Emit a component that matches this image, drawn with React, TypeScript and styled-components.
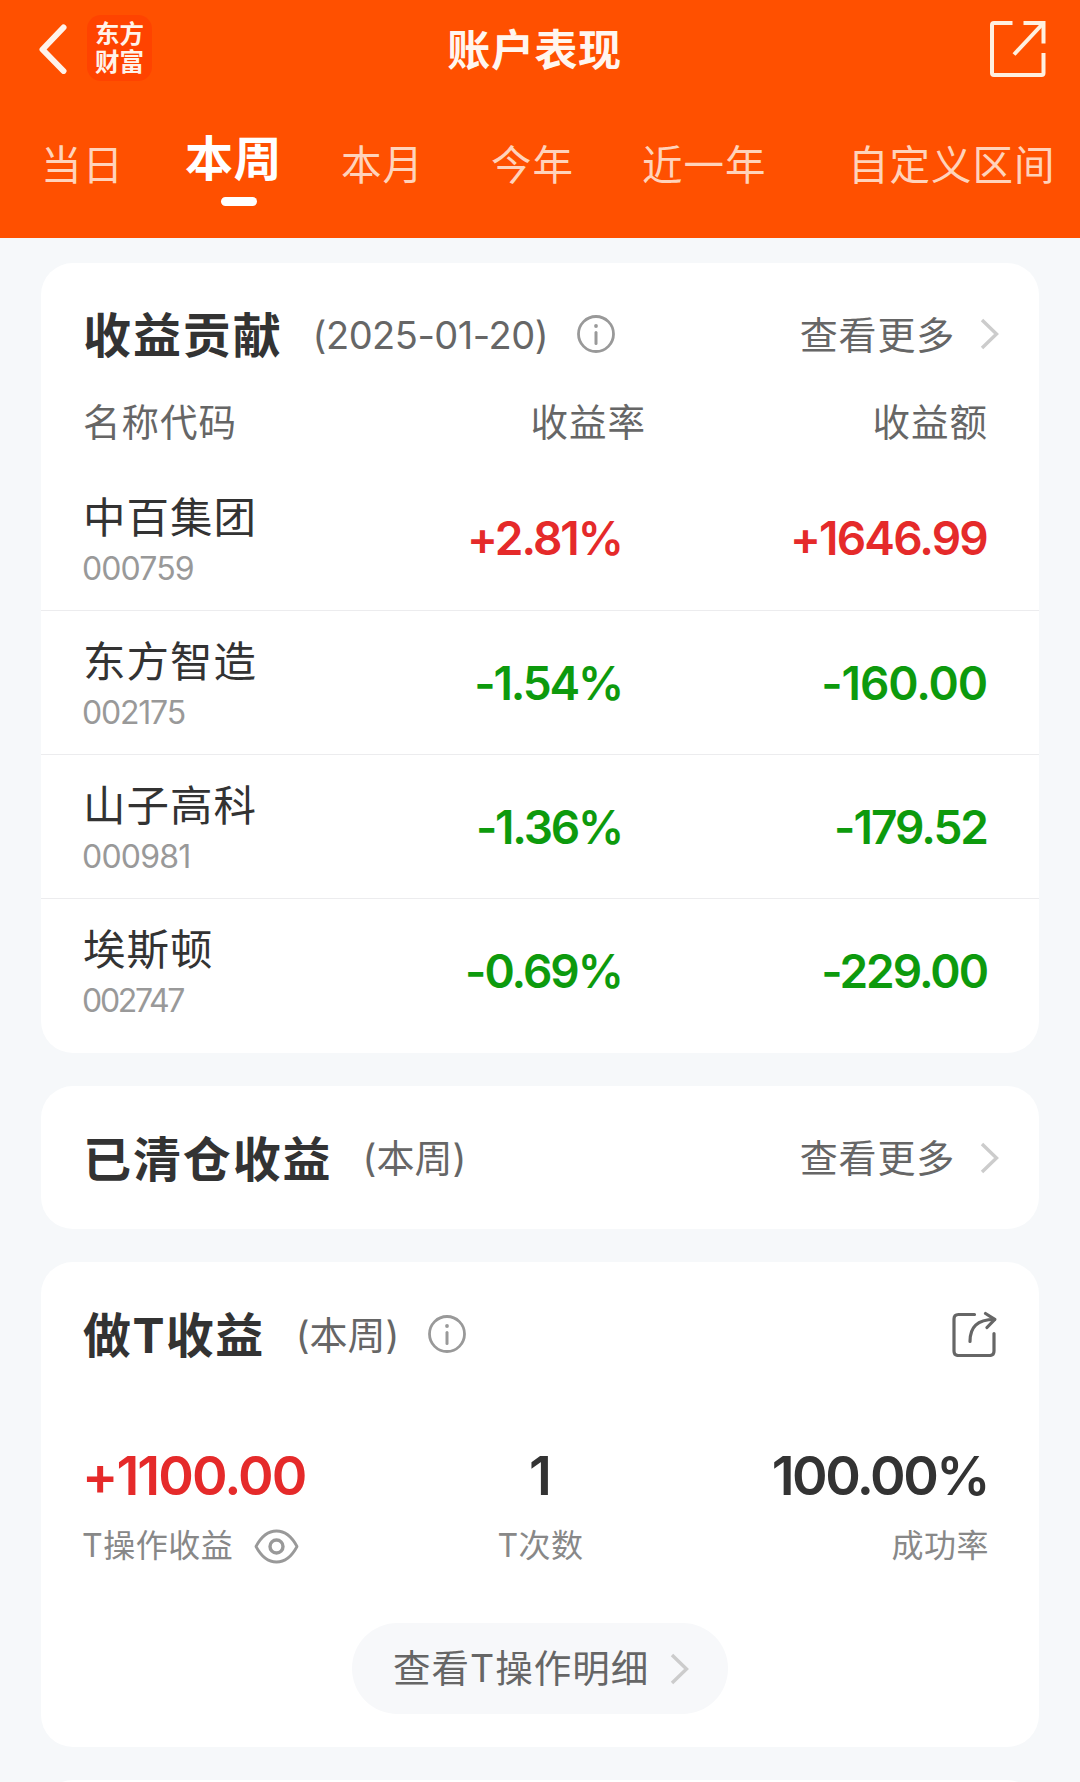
import React from "react";
import styled, { createGlobalStyle } from "styled-components";

const GlobalStyle = createGlobalStyle`
  * { box-sizing: border-box; }
  body {
    margin: 0;
    background: #f6f8fa;
    font-family: Inter, "Noto Sans CJK SC", sans-serif;
    color: #333;
  }
`;

const Screen = styled.div`
  width: 1080px;
  height: 1782px;
  overflow: hidden;
  background: #f6f8fa;
`;

const Header = styled.header`
  height: 238px;
  background: #ff5000;
  color: #fff;
`;

const NavBar = styled.div`
  height: 98px;
  display: grid;
  grid-template-columns: 300px 1fr 300px;
  align-items: center;
  padding: 0 34px 0 39px;
`;

const NavLeft = styled.div`
  display: flex;
  align-items: center;
  gap: 20px;
`;

const NavRight = styled.div`
  display: flex;
  justify-content: flex-end;
`;

const Logo = styled.div`
  width: 65px;
  height: 66px;
  margin-top: -2px;
  border-radius: 14px;
  background: #ff4300;
  display: flex;
  flex-direction: column;
  justify-content: center;
  align-items: center;
  font-size: 24.5px;
  font-weight: 700;
  line-height: 28px;
  color: #fff3ea;
`;

const NavTitle = styled.h1`
  margin: 0 7px 0 -9px;
  padding-top: 1px;
  text-align: center;
  font-size: 43px;
  font-weight: 700;
  letter-spacing: 0.6px;
  line-height: 60px;
  color: #fff6ef;
`;

const Tabs = styled.nav`
  height: 140px;
  display: flex;
  padding: 36px 0 0 41px;
`;

const Tab = styled.div<{ $width: number; $active?: boolean }>`
  width: ${(p) => p.$width}px;
  flex: none;
  display: flex;
  flex-direction: column;
  white-space: nowrap;
  margin-top: ${(p) => (p.$active ? -7 : 0)}px;
  font-size: ${(p) => (p.$active ? 48 : 40.5)}px;
  font-weight: ${(p) => (p.$active ? 700 : 400)};
  letter-spacing: ${(p) => (p.$active ? 0.5 : 1)}px;
  line-height: 64px;
  color: ${(p) => (p.$active ? "#fff" : "#ffd3bb")};
`;

const TabMark = styled.span`
  width: 36px;
  height: 9px;
  margin: 6px 0 0 36px;
  border-radius: 5px;
  background: #fff;
`;

const Content = styled.main`
  display: flex;
  flex-direction: column;
  gap: 33px;
  padding: 25px 41px 0;
`;

const Card = styled.section<{ $height: number }>`
  height: ${(p) => p.$height}px;
  flex: none;
  border-radius: 32px;
  background: #fff;
`;

const CardHead = styled.div<{ $height: number }>`
  height: ${(p) => p.$height}px;
  display: flex;
  align-items: center;
  padding: 0 40px 0 42px;
`;

const CardTitle = styled.h2<{ $gap: number; $spacing?: number }>`
  margin: 0 ${(p) => p.$gap}px 0 0;
  padding-top: 4px;
  font-size: 48px;
  font-weight: 700;
  letter-spacing: ${(p) => p.$spacing ?? 1.9}px;
  line-height: 60px;
  color: #333;
`;

const Period = styled.span<{ $spacing?: number }>`
  margin-right: 29px;
  padding-top: 1px;
  font-size: 38px;
  letter-spacing: ${(p) => p.$spacing ?? 0}px;
  line-height: 50px;
  color: #666;
`;

const More = styled.div`
  margin-left: auto;
  display: flex;
  align-items: center;
  gap: 25px;
  font-size: 38px;
  letter-spacing: 0.8px;
  line-height: 50px;
  color: #666;
`;

const MoreText = styled.span`
  padding-top: 1px;
`;

const CardAction = styled.div`
  margin-left: auto;
  margin-right: 2px;
  display: flex;
`;

const ColumnHeads = styled.div`
  display: grid;
  grid-template-columns: 260px 303px 1fr;
  height: 34px;
  margin-bottom: 27px;
  padding: 1px 51px 0 42px;
  font-size: 37.5px;
  letter-spacing: 1px;
  line-height: 34px;
  color: #666;
`;

const HeadCell = styled.span<{ $right?: boolean }>`
  text-align: ${(p) => (p.$right ? "right" : "left")};
`;

const StockRow = styled.div`
  height: 144px;
  display: grid;
  grid-template-columns: 260px 277px 1fr;
  align-items: center;
  padding: 0 52px 0 43px;

  & + & {
    border-top: 1px solid #ececee;
  }
`;

const StockName = styled.div`
  padding-top: 3px;
  margin-left: -1px;
  font-size: 42.5px;
  letter-spacing: 1px;
  line-height: 50px;
  color: #333;
`;

const StockCode = styled.div<{ $spacing: number }>`
  margin-top: 8px;
  margin-left: -2px;
  font-size: 32px;
  font-weight: 400;
  letter-spacing: ${(p) => p.$spacing}px;
  line-height: 36px;
  color: #999;
`;

const Amount = styled.div<{ $up: boolean; $spacing: number; $bleed: number }>`
  text-align: right;
  font-size: 46px;
  font-weight: 600;
  letter-spacing: ${(p) => p.$spacing}px;
  margin-right: ${(p) => -p.$bleed}px;
  line-height: 56px;
  white-space: nowrap;
  color: ${(p) => (p.$up ? "#e52a2a" : "#0d9a0d")};
`;

const Stats = styled.div`
  display: grid;
  grid-template-columns: 300px 1fr 300px;
  padding: 40px 50px 0 41px;
`;

const Stat = styled.div<{ $align: string; $shift?: number }>`
  display: flex;
  flex-direction: column;
  align-items: ${(p) => p.$align};
  margin-left: ${(p) => p.$shift ?? 0}px;
`;

const StatValue = styled.div<{ $up?: boolean; $spacing: number; $inset?: number }>`
  margin-right: ${(p) => p.$inset ?? 0}px;
  font-size: 54px;
  font-weight: 600;
  letter-spacing: ${(p) => p.$spacing}px;
  line-height: 60px;
  color: ${(p) => (p.$up ? "#e52a2a" : "#333")};
`;

const StatLabel = styled.div`
  display: flex;
  align-items: center;
  gap: 21px;
  margin-top: 20px;
  font-size: 32px;
  letter-spacing: 0.5px;
  line-height: 40px;
  color: #888;
`;

const DetailButton = styled.button`
  display: flex;
  align-items: center;
  justify-content: space-between;
  width: 376px;
  height: 91px;
  margin: 57px auto 0 311px;
  padding: 0 39px 0 41px;
  border: 0;
  border-radius: 46px;
  background: #f7f8fa;
  font-family: inherit;
  font-size: 37.5px;
  letter-spacing: 1px;
  color: #666;
`;

const DetailText = styled.span`
  padding-top: 1px;
  line-height: 50px;
`;

const Chevron = () => (
  <svg width="19" height="32" viewBox="0 0 19 32" fill="none" stroke="#ccc" strokeWidth="3.4">
    <path d="M2 2 L16.5 16 L2 30" />
  </svg>
);

const BackIcon = () => (
  <svg width="28" height="50" viewBox="0 0 28 50" fill="none" stroke="#fff3ea" strokeWidth="6" strokeLinecap="round" strokeLinejoin="round">
    <path d="M24.5 3.5 L3.5 25.5 L24.5 47" />
  </svg>
);

const OpenIcon = () => (
  <svg width="56" height="58" viewBox="0 0 56 58" fill="none" stroke="#fff0e0" strokeWidth="4" strokeLinejoin="round">
    <path d="M22.5 3 H4 Q2 3 2 5 V53 Q2 55 4 55 H51.5 Q53.5 55 53.5 53 V33" />
    <path d="M33.5 3 H53.5 V23.5" strokeLinejoin="miter" />
    <path d="M53 3.5 L24 34.5" />
  </svg>
);

const InfoIcon = () => (
  <svg width="38" height="38" viewBox="0 0 38 38" fill="none" stroke="#999">
    <circle cx="19" cy="19" r="17.5" strokeWidth="2.8" />
    <path d="M19 17.5 V28.5" strokeWidth="3" strokeLinecap="round" />
    <circle cx="19" cy="11" r="1.9" fill="#999" stroke="none" />
  </svg>
);

const ShareIcon = () => (
  <svg width="45" height="46" viewBox="0 0 45 46" fill="none" stroke="#666" strokeWidth="3.2" strokeLinecap="round" strokeLinejoin="round">
    <path d="M22.5 3.5 H6.5 Q2 3.5 2 8 V40 Q2 44.5 6.5 44.5 H37.5 Q42 44.5 42 40 V22.5" />
    <path d="M18 30.5 C18 16 25 8.500 42.5 8.500" />
    <path d="M33.5 2.5 L42.8 8.3 L35 16.5" />
  </svg>
);

const EyeIcon = () => (
  <svg width="45" height="35" viewBox="0 0 45 35" fill="none" stroke="#999" strokeWidth="2.8" strokeLinejoin="round">
    <path d="M2 17.5 C7 8 14 2 22.5 2 C31 2 38 8 43 17.5 C38 27 31 33 22.5 33 C14 33 7 27 2 17.5 Z" />
    <circle cx="22.5" cy="17.5" r="6.5" strokeWidth="3.4" />
  </svg>
);

const tabs = [
  { label: "当日", width: 144 },
  { label: "本周", width: 156, active: true },
  { label: "本月", width: 150 },
  { label: "今年", width: 151 },
  { label: "近一年", width: 206 },
  { label: "自定义区间", width: 220 },
];

const stocks = [
  { name: "中百集团", code: "000759", codeLs: -0.9, rate: "+2.81%", rateLs: -2, amount: "+1646.99", amountLs: -1.8 },
  { name: "东方智造", code: "002175", codeLs: -1.2, rate: "-1.54%", rateLs: -2.2, amount: "-160.00", amountLs: -1.1 },
  { name: "山子高科", code: "000981", codeLs: -0.8, rate: "-1.36%", rateLs: -2.2, amount: "-179.52", amountLs: -2 },
  { name: "埃斯顿", code: "002747", codeLs: -2.3, rate: "-0.69%", rateLs: -2, amount: "-229.00", amountLs: -2 },
];

export default function App() {
  return (
    <Screen>
      <GlobalStyle />
      <Header>
        <NavBar>
          <NavLeft>
            <BackIcon />
            <Logo>
              <span>东方</span>
              <span>财富</span>
            </Logo>
          </NavLeft>
          <NavTitle>账户表现</NavTitle>
          <NavRight>
            <OpenIcon />
          </NavRight>
        </NavBar>
        <Tabs>
          {tabs.map((t) => (
            <Tab key={t.label} $width={t.width} $active={t.active}>
              {t.label}
              {t.active && <TabMark />}
            </Tab>
          ))}
        </Tabs>
      </Header>

      <Content>
        <Card $height={790}>
          <CardHead $height={142}>
            <CardTitle $gap={30}>收益贡献</CardTitle>
            <Period $spacing={-0.5}>(2025-01-20)</Period>
            <InfoIcon />
            <More>
              <MoreText>查看更多</MoreText>
              <Chevron />
            </More>
          </CardHead>
          <ColumnHeads>
            <HeadCell>名称代码</HeadCell>
            <HeadCell $right>收益率</HeadCell>
            <HeadCell $right>收益额</HeadCell>
          </ColumnHeads>
          {stocks.map((s) => (
            <StockRow key={s.code}>
              <div>
                <StockName>{s.name}</StockName>
                <StockCode $spacing={s.codeLs}>{s.code}</StockCode>
              </div>
              <Amount $up={s.rate.startsWith("+")} $spacing={s.rateLs} $bleed={1}>{s.rate}</Amount>
              <Amount $up={s.amount.startsWith("+")} $spacing={s.amountLs} $bleed={0}>{s.amount}</Amount>
            </StockRow>
          ))}
        </Card>

        <Card $height={143}>
          <CardHead $height={143}>
            <CardTitle $gap={30}>已清仓收益</CardTitle>
            <Period>(本周)</Period>
            <More>
              <MoreText>查看更多</MoreText>
              <Chevron />
            </More>
          </CardHead>
        </Card>

        <Card $height={485}>
          <CardHead $height={144}>
            <CardTitle $gap={31} $spacing={1.4}>做T收益</CardTitle>
            <Period>(本周)</Period>
            <InfoIcon />
            <CardAction>
              <ShareIcon />
            </CardAction>
          </CardHead>
          <Stats>
            <Stat $align="flex-start">
              <StatValue $up $spacing={-1.9}>+1100.00</StatValue>
              <StatLabel>
                T操作收益
                <EyeIcon />
              </StatLabel>
            </Stat>
            <Stat $align="center" $shift={10}>
              <StatValue $spacing={0}>1</StatValue>
              <StatLabel>T次数</StatLabel>
            </Stat>
            <Stat $align="flex-end">
              <StatValue $spacing={-2.5} $inset={1}>100.00%</StatValue>
              <StatLabel>成功率</StatLabel>
            </Stat>
          </Stats>
          <DetailButton>
            <DetailText>查看T操作明细</DetailText>
            <Chevron />
          </DetailButton>
        </Card>

        <Card $height={120} />
      </Content>
    </Screen>
  );
}
